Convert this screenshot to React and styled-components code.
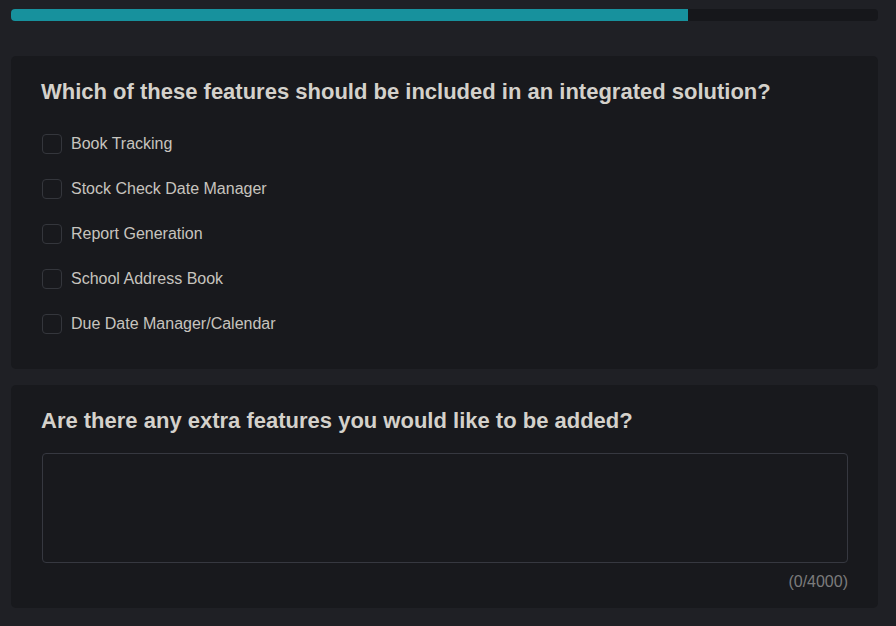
import React, { useState } from 'react';
import styled, { createGlobalStyle } from 'styled-components';

const GlobalStyle = createGlobalStyle`
  html, body {
    margin: 0;
    padding: 0;
    background: #1f2025;
    font-family: "Liberation Sans", Arial, sans-serif;
  }
`;

const Page = styled.div`
  padding: 9px 18px 18px 11px;
  display: flex;
  flex-direction: column;
`;

const Track = styled.div`
  height: 12px;
  border-radius: 4px;
  background: #16171b;
  overflow: hidden;
  margin-bottom: 35px;
`;

const Fill = styled.div`
  height: 100%;
  background: #17919d;
`;

const Card = styled.div`
  background: #18191d;
  border-radius: 5px;
  padding: ${({ $pad }) => $pad || '23px 30px 23px'};
  margin-bottom: 16px;
`;

const Question = styled.h2`
  margin: 0;
  font-size: 22px;
  line-height: 26px;
  font-weight: 700;
  color: #d4d1cb;
`;

const Options = styled.div`
  margin-top: 16px;
  display: flex;
  flex-direction: column;
`;

const Option = styled.label`
  height: 45px;
  display: flex;
  align-items: center;
  gap: 9px;
  cursor: pointer;
  padding-left: 1px;
`;

const Box = styled.span`
  width: 18px;
  height: 18px;
  border: 1px solid #34363c;
  border-radius: 4px;
  background: ${({ $on }) => ($on ? '#17919d' : 'transparent')};
  box-sizing: content-box;
`;

const Label = styled.span`
  font-size: 16px;
  color: #c7c4bf;
`;

const TextArea = styled.textarea`
  display: block;
  margin: 19px 0 0 1px;
  width: calc(100% - 1px);
  height: 110px;
  box-sizing: border-box;
  background: #18191d;
  border: 1px solid #363840;
  border-radius: 4px;
  resize: none;
  color: #c7c4bf;
  font-family: inherit;
  font-size: 16px;
  padding: 10px 12px;
  outline: none;
`;

const Counter = styled.div`
  text-align: right;
  margin-top: 10px;
  font-size: 16px;
  line-height: 18px;
  color: #7c7c7c;
`;

const features = [
  'Book Tracking',
  'Stock Check Date Manager',
  'Report Generation',
  'School Address Book',
  'Due Date Manager/Calendar',
];

export default function App() {
  const [checked, setChecked] = useState({});
  const [text, setText] = useState('');

  return (
    <>
      <GlobalStyle />
      <Page>
        <Track>
          <Fill style={{ width: `${(677 / 867) * 100}%` }} />
        </Track>
        <Card>
          <Question>Which of these features should be included in an integrated solution?</Question>
          <Options>
            {features.map((f) => (
              <Option key={f} onClick={() => setChecked({ ...checked, [f]: !checked[f] })}>
                <Box $on={checked[f]} />
                <Label>{f}</Label>
              </Option>
            ))}
          </Options>
        </Card>
        <Card $pad="23px 30px 17px 30px">
          <Question>Are there any extra features you would like to be added?</Question>
          <TextArea value={text} maxLength={4000} onChange={(e) => setText(e.target.value)} />
          <Counter>({text.length}/4000)</Counter>
        </Card>
      </Page>
    </>
  );
}
